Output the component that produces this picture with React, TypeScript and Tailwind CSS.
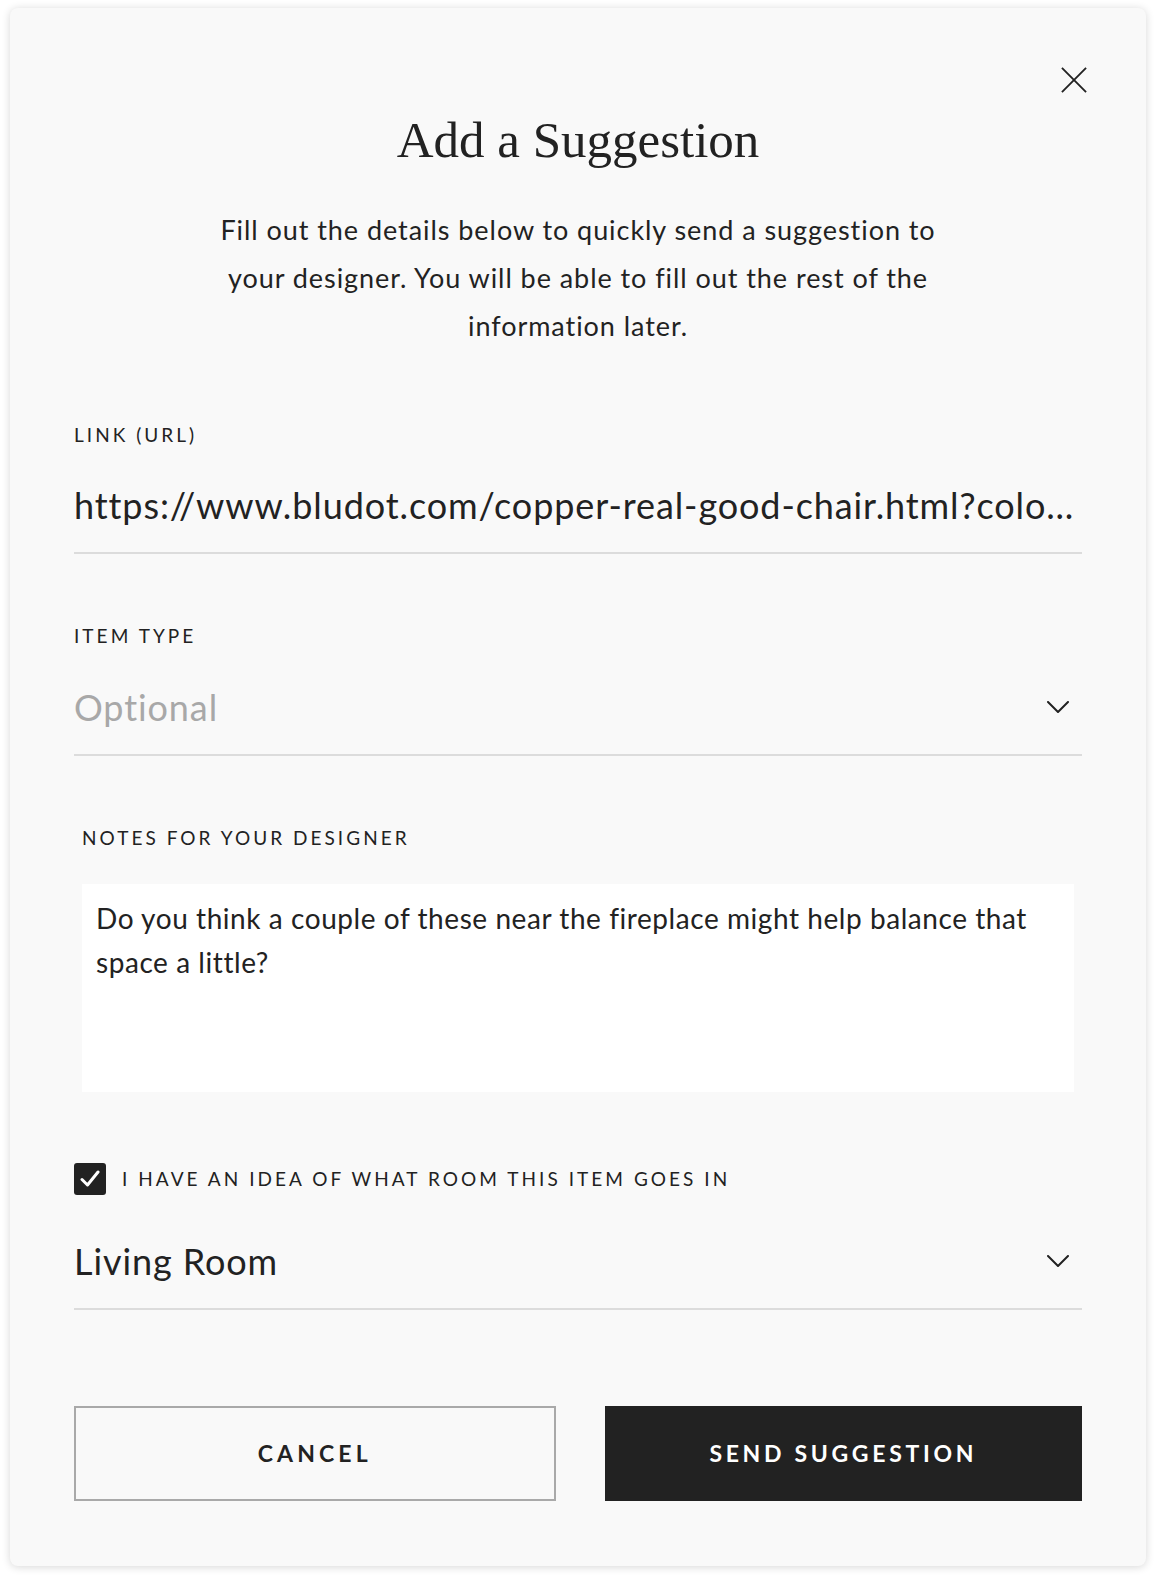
import React from "react";

const sans = "font-['Lato','Noto_Sans',sans-serif]";

function Chevron() {
  return (
    <svg width="22" height="12" viewBox="0 0 22 12" fill="none" className="shrink-0">
      <path d="M1 1 L11 11 L21 1" stroke="#222" strokeWidth="2" strokeLinecap="round" strokeLinejoin="round" />
    </svg>
  );
}

export default function App() {
  return (
    <div className={`min-h-[1578px] bg-white px-[10px] pt-[8px] pb-[12px] ${sans}`}>
      <div className="relative rounded-[8px] bg-[#f9f9f9] px-16 pb-[65px] pt-[102px] text-[#222] shadow-[0_1px_8px_rgba(0,0,0,0.16)]">
        <button className="absolute right-[59px] top-[59px] flex h-[26px] w-[26px] items-center justify-center" aria-label="Close">
          <svg width="28" height="28" viewBox="0 0 28 28" fill="none">
            <path d="M1 1 L27 27 M27 1 L1 27" stroke="#222" strokeWidth="2" />
          </svg>
        </button>

        <h1 className="text-center font-['Liberation_Serif','Times_New_Roman',serif] text-[51px] leading-[60px] text-[#222]">
          Add a Suggestion
        </h1>

        <p className="mt-[36px] text-center text-[27px] leading-[48px] tracking-[0.035em] text-[#222]">
          Fill out the details below to quickly send a suggestion to
          <br />
          your designer. You will be able to fill out the rest of the
          <br />
          information later.
        </p>

        {/* Link */}
        <div className="mt-[73px]">
          <div className="text-[19px] leading-6 tracking-[0.16em]">LINK (URL)</div>
          <div className="border-b-2 border-[#dcdcdc] pb-[23px] pt-[34px]">
            <div className="overflow-hidden whitespace-nowrap text-[36px] leading-[48px] tracking-[0.025em]">
              https://www.bludot.com/copper-real-good-chair.html?colo…
            </div>
          </div>
        </div>

        {/* Item type */}
        <div className="mt-[70px]">
          <div className="text-[19px] leading-6 tracking-[0.16em]">ITEM TYPE</div>
          <div className="flex items-center justify-between border-b-2 border-[#dcdcdc] pb-[23px] pl-0 pr-[13px] pt-[35px]">
            <div className="text-[36px] leading-[48px] tracking-[0.025em] text-[#a8a8a8]">Optional</div>
            <Chevron />
          </div>
        </div>

        {/* Notes */}
        <div className="mt-[70px] px-2">
          <div className="text-[19px] leading-6 tracking-[0.16em]">NOTES FOR YOUR DESIGNER</div>
          <div className="mt-[34px] h-[208px] bg-white px-[14px] pt-[12px] text-[28px] leading-[44px] tracking-[0.02em]">
            Do you think a couple of these near the fireplace might help balance that
            <br />
            space a little?
          </div>
        </div>

        {/* Checkbox */}
        <div className="mt-[71px] flex items-center gap-4">
          <div className="flex h-[32px] w-[32px] items-center justify-center rounded-[3px] bg-[#222]">
            <svg width="20" height="18" viewBox="0 0 20 18" fill="none">
              <path d="M2 9.5 L7.5 15 L18 2" stroke="#fff" strokeWidth="3" strokeLinecap="round" strokeLinejoin="round" />
            </svg>
          </div>
          <div className="text-[19px] leading-6 tracking-[0.16em]">I HAVE AN IDEA OF WHAT ROOM THIS ITEM GOES IN</div>
        </div>

        {/* Room */}
        <div className="mt-[42px] flex items-center justify-between border-b-2 border-[#dcdcdc] pb-[23px] pr-[13px]">
          <div className="text-[36px] leading-[48px] tracking-[0.025em]">Living Room</div>
          <Chevron />
        </div>

        {/* Buttons */}
        <div className="mt-[96px] flex gap-[49px]">
          <button className="flex h-[95px] flex-1 items-center justify-center border-2 border-[#a9a9a9] text-[23px] font-bold tracking-[0.18em] text-[#222]">
            CANCEL
          </button>
          <button className="flex h-[95px] flex-1 items-center justify-center bg-[#222] text-[23px] font-bold tracking-[0.16em] text-white">
            SEND SUGGESTION
          </button>
        </div>
      </div>
    </div>
  );
}
